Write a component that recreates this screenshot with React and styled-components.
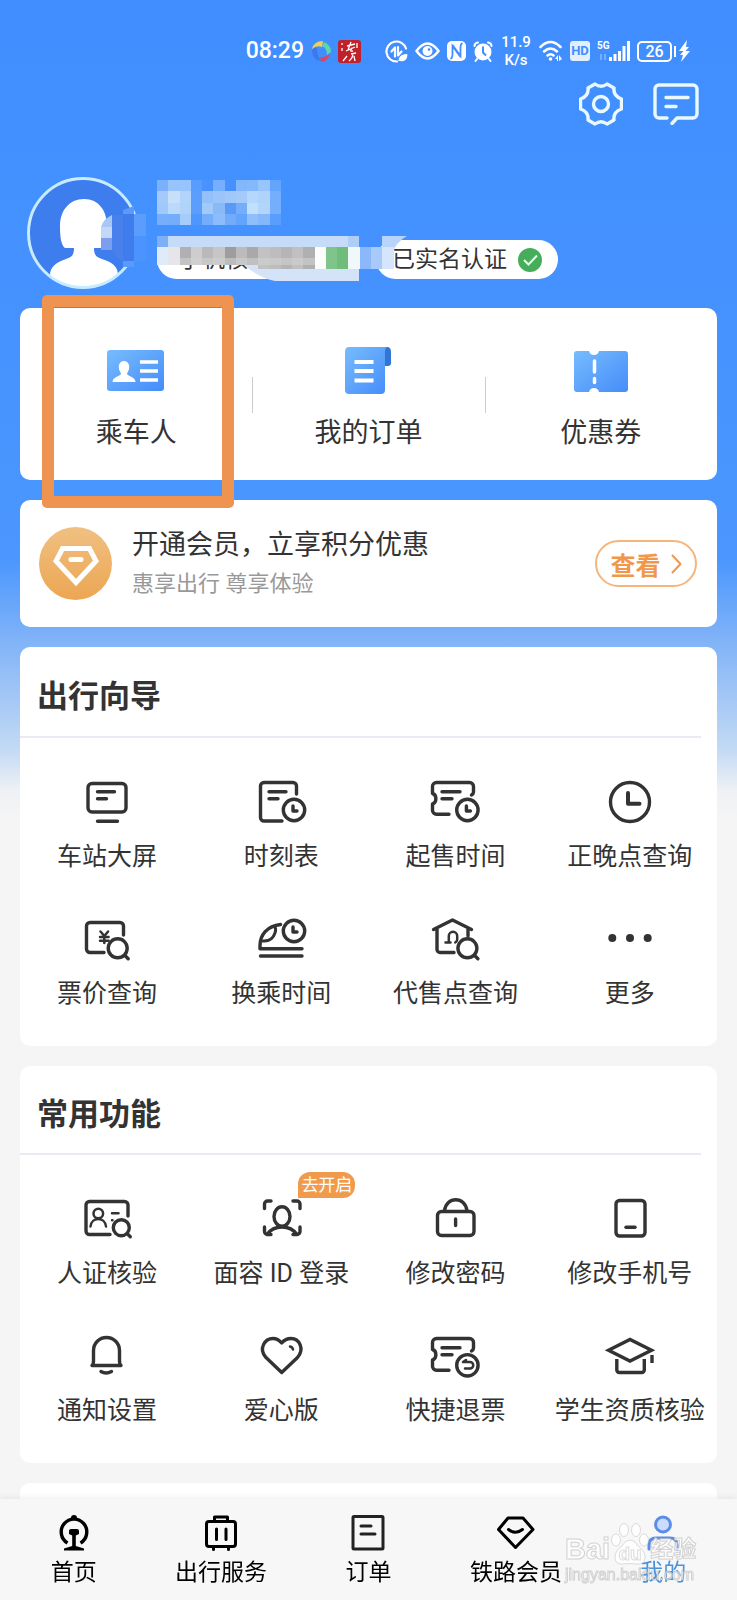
import React from 'react';
import styled, { createGlobalStyle } from 'styled-components';

const GlobalStyle = createGlobalStyle`
    * {
        box-sizing: border-box;
    }
    body {
        margin: 0;
        background: #f5f5f5;
        color: #333;
        font-family: Roboto, "Noto Sans CJK SC", sans-serif;
    }
    button {
        padding: 0;
        border: 0;
        background: none;
        font: inherit;
        color: inherit;
        cursor: pointer;
    }
    svg {
        display: block;
    }
`;

const Screen = styled.div`
    display: flex;
    flex-direction: column;
    height: 100vh;
`;

const Content = styled.main`
    flex: 1;
    min-height: 0;
    overflow-y: auto;
    scrollbar-width: none;
`;

const Backdrop = styled.div`
    background: linear-gradient(
        #408eff 0, #4592ff 300px, #4b97fe 560px, #7db1f8 635px,
        #c3daf4 750px, #eef1f5 790px, #f5f5f5 820px
    );
`;

/* status bar */

const StatusBar = styled.div`
    display: flex;
    align-items: center;
    justify-content: flex-end;
    gap: 7px;
    height: 66px;
    padding: 36px 47px 0 0;
    color: #fff;
`;

const Clock = styled.time`
    font-size: 23px;
    font-weight: 500;
    line-height: 30px;
`;

const StatusGap = styled.span`
    width: 10px;
`;

const Speed = styled.span`
    width: 32px;
    font-size: 15px;
    font-weight: 500;
    line-height: 18px;
    text-align: center;
`;

const HdTag = styled.span`
    width: 20px;
    border-radius: 3px;
    background: #e3efff;
    color: #408eff;
    font-size: 13px;
    font-weight: 700;
    line-height: 20px;
    text-align: center;
`;

const Battery = styled.span`
    position: relative;
    width: 35px;
    border: 2px solid #fff;
    border-radius: 5px;
    font-size: 16px;
    font-weight: 500;
    line-height: 17px;
    text-align: center;

    &::after {
        content: "";
        position: absolute;
        top: 3px;
        right: -6px;
        width: 2px;
        height: 11px;
        background: #fff;
    }
`;

/* profile header */

const Actions = styled.div`
    display: flex;
    justify-content: flex-end;
    align-items: center;
    gap: 30px;
    height: 44px;
    margin-top: 16px;
    padding-right: 38px;
`;

const Profile = styled.section`
    display: flex;
    gap: 18px;
    margin-top: 51px;
    padding: 0 27px;
`;

const ProfileInfo = styled.div`
    display: flex;
    flex-direction: column;
    gap: 15px;
    padding-top: 3px;
`;

const Pills = styled.div`
    position: relative;
    display: flex;
    gap: 6px;
`;

const Pill = styled.span`
    display: flex;
    align-items: center;
    gap: 11px;
    min-width: ${props => props.$wide ? '213px' : '0'};
    height: 39px;
    padding: 0 16px 0 ${props => props.$wide ? '22px' : '16px'};
    border-radius: 20px;
    background: #fff;
    font-size: 23px;
    line-height: 36px;
`;

const PillMask = styled.svg`
    position: absolute;
    top: -4px;
    left: 0;
`;

/* cards */

const Stack = styled.div`
    display: flex;
    flex-direction: column;
    gap: 20px;
    padding: 19px 20px 0;
`;

const Card = styled.section`
    border-radius: 10px;
    background: #fff;
`;

const Shortcuts = styled(Card)`
    position: relative;
    display: grid;
    grid-template-columns: repeat(3, 1fr);
`;

const Shortcut = styled.button`
    position: relative;
    display: flex;
    flex-direction: column;
    align-items: center;
    gap: 19px;
    padding: 38px 0 29px;
    font-size: 27px;
    line-height: 36px;

    & + &::before {
        content: "";
        position: absolute;
        left: 0;
        top: 69px;
        width: 1px;
        height: 36px;
        background: #ccc;
    }
`;

const Highlight = styled.span`
    position: absolute;
    top: -13px;
    left: 22px;
    bottom: -28px;
    width: 192px;
    border: 12px solid #ee9350;
    border-radius: 5px;
    pointer-events: none;
    z-index: 1;
`;

const MemberCard = styled(Card)`
    display: flex;
    align-items: center;
    gap: 20px;
    height: 127px;
    padding: 0 20px 0 19px;
`;

const MemberText = styled.div`
    flex: 1;

    h3 {
        margin: 0;
        font-size: 27px;
        font-weight: 400;
        line-height: 40px;
    }
    p {
        margin: 0;
        color: #999;
        font-size: 22px;
        line-height: 38px;
    }
`;

const ViewButton = styled.button`
    display: flex;
    align-items: center;
    justify-content: center;
    gap: 10px;
    width: 102px;
    height: 47px;
    border: 2px solid #f5b57c;
    border-radius: 24px;
    color: #f0974a;
    font-size: 25px;
    font-weight: 700;
`;

const SectionTitle = styled.h2`
    display: flex;
    align-items: center;
    height: ${props => props.$height}px;
    margin: 0 16px 0 0;
    padding: 10px 0 6px 17px;
    border-bottom: 2px solid #e9ebf2;
    font-size: 31px;
    font-weight: 700;
`;

const TileGrid = styled.div`
    display: grid;
    grid-template-columns: repeat(4, 1fr);
    row-gap: 39px;
    padding: 39px 0 34px;
`;

const Tile = styled.button`
    position: relative;
    display: flex;
    flex-direction: column;
    align-items: center;
    gap: 12px;
    font-size: 25px;
    line-height: 36px;
    white-space: nowrap;
`;

const Badge = styled.span`
    position: absolute;
    top: -22px;
    left: calc(50% + 17px);
    padding: 0 3px;
    border-radius: 12px 12px 12px 0;
    background: #f29a4c;
    color: #fff;
    font-size: 17px;
    line-height: 26px;
`;

const NextCard = styled(Card)`
    height: 80px;
`;

/* bottom tabs */

const TabBar = styled.nav`
    position: relative;
    display: grid;
    grid-template-columns: repeat(5, 1fr);
    padding: 16px 0 11px;
    background: #f7f7f7;
    box-shadow: 0 -2px 6px rgba(0, 0, 0, 0.06);
`;

const Tab = styled.a`
    display: flex;
    flex-direction: column;
    align-items: center;
    gap: 6px;
    color: ${props => props.$active ? '#4a93dc' : '#000'};
    font-size: 23px;
    line-height: 32px;
    text-decoration: none;
`;

const Watermark = styled.div`
    position: absolute;
    right: 40px;
    bottom: 15px;
    width: 132px;
    color: rgba(255, 255, 255, 0.75);
    font-family: "Liberation Sans", "Noto Sans CJK SC", sans-serif;
    -webkit-text-stroke: 1px rgba(170, 170, 170, 0.5);
    pointer-events: none;
`;

const WatermarkBrand = styled.div`
    display: flex;
    align-items: flex-end;
    font-size: 29px;
    font-weight: 700;
    line-height: 32px;

    small {
        font-size: 23px;
    }
`;

const WatermarkSite = styled.div`
    font-size: 16px;
    line-height: 20px;
`;

/* icons */

const Glyph = ({ children, width = 56, height = 50, color = '#333', stroke = 3.4 }) => (
    <svg
        width={width}
        height={height}
        viewBox={`0 0 ${width} ${height}`}
        fill="none"
        stroke={color}
        strokeWidth={stroke}
        strokeLinecap="round"
        strokeLinejoin="round"
        aria-hidden="true"
    >
        {children}
    </svg>
);

const SmallClock = ({ x, y }) => (
    <g>
        <circle cx={x} cy={y} r="10.7"/>
        <path d={`M${x - 1} ${y - 4}v5h4`}/>
    </g>
);

const Lens = ({ x, y, r = 9.5 }) => (
    <g>
        <circle cx={x} cy={y} r={r}/>
        <path d={`M${x + r - 2} ${y + r - 2}l3 3`}/>
    </g>
);

const ticketPath = "M21 37.2H8.5a4 4 0 0 1-4-4V27c4.5-1 4.5-9.5 0-10.5V9.5a4 4 0 0 1 4-4h33a4 4 0 0 1 4 4v5.5q0 2-2 3M14 14.7h18M14 21.7h10";

const icons = {
    screen: <Glyph><rect x="9" y="6.5" width="38" height="28.5" rx="4"/><path d="M18.5 14.7h17M18.5 21.7h9M18.5 44.3h20"/></Glyph>,
    timetable: (
        <Glyph>
            <path d="M43.5 17V9A3.5 3.5 0 0 0 40 5.5H11A3.5 3.5 0 0 0 7.5 9v31.5A3.5 3.5 0 0 0 11 44h18M16 14.7h17M16 21.7h9"/>
            <SmallClock x={41} y={33}/>
        </Glyph>
    ),
    saleTime: <Glyph><path d={ticketPath}/><SmallClock x={39.4} y={33}/></Glyph>,
    clock: <Glyph><circle cx="28" cy="25" r="19.5"/><path strokeWidth="4" d="M26 16v10.7h11.5"/></Glyph>,
    price: (
        <Glyph>
            <path d="M44.5 21V12A3.5 3.5 0 0 0 41 8.5H11A3.5 3.5 0 0 0 7.5 12v23a3.5 3.5 0 0 0 3.5 3.5h14"/>
            <path strokeWidth="2.5" d="M21.5 17.5l3.8 4.5 3.8-4.5M21 23h8.6M21 26.8h8.6M25.3 22v7"/>
            <Lens x={38.7} y={34.3}/>
        </Glyph>
    ),
    train: (
        <Glyph>
            <path d="M27.6 10.5C14 12 7 21 7 31.5v3.2h42M7.500 42h41.5"/>
            <path strokeWidth="3" d="M21.500 12.500q2 2 .5 6.500c-2 6-7 8.500-12.500 8"/>
            <SmallClock x={41} y={17}/>
        </Glyph>
    ),
    agency: (
        <Glyph>
            <path d="M5.5 15.5l19-9.5 19 9.5M9 14v21.5a3 3 0 0 0 3 3h14M40 14.5V22"/>
            <path strokeWidth="2.5" d="M17.500 28.500h5M20.800 28V22a4.200 4.200 0 0 1 8.400 0v3.500q0 2-2 3"/>
            <Lens x={39.4} y={34.3}/>
        </Glyph>
    ),
    more: <Glyph><g fill="#333" stroke="none"><circle cx="10.3" cy="24" r="4"/><circle cx="28" cy="24" r="4"/><circle cx="45.7" cy="24" r="4"/></g></Glyph>,
    verify: (
        <Glyph>
            <path d="M49 22V11a3.5 3.5 0 0 0-3.5-3.5h-35A3.5 3.5 0 0 0 7 11v26a3.5 3.5 0 0 0 3.5 3.5H31"/>
            <path strokeWidth="2.5" d="M11.5 32.5c1-10 14.5-10 15.5 0M33 19.3h6.5M33 26.3h.5"/>
            <circle cx="19.3" cy="19.5" r="4.8" strokeWidth="2.5"/>
            <Lens x={42.3} y={33.7} r={8}/>
        </Glyph>
    ),
    face: (
        <Glyph>
            <path d="M11.500 14.500V10a3 3 0 0 1 3-3H18M40 7h4a3 3 0 0 1 3 3v4.500M11.500 33v4.500a3 3 0 0 0 3 3H18M40 40.500h4a3 3 0 0 0 3-3V33M14 40.500c7-10 23-10 30 0"/>
            <ellipse cx="29" cy="22.5" rx="8" ry="9.8"/>
        </Glyph>
    ),
    lock: <Glyph><rect x="9.500" y="17.500" width="36.500" height="24" rx="4"/><path d="M16.500 17C18 2 37.500 2 39 17M27.600 25v6.500"/></Glyph>,
    phone: <Glyph><rect x="14" y="6.5" width="29" height="35.5" rx="3.5"/><path d="M24 33.3h9"/></Glyph>,
    bell: <Glyph><path d="M13 34.500q1.500-1 1.500-5V19.500a13 13 0 0 1 26 0v10q0 4 1.500 5zM22 40.500q5 3 10.500 0"/></Glyph>,
    heart: (
        <Glyph>
            <path d="M28.700 41.500L13 26.500C5 17.500 12 7.500 20 7.500q5 0 8.700 4.500Q32.500 7.500 38 7.500c8 0 14 10 6.500 19z"/>
            <path strokeWidth="2.5" d="M37 15.5q2.500.5 3 3"/>
        </Glyph>
    ),
    refund: (
        <Glyph>
            <path transform="translate(0 2)" d={ticketPath}/>
            <circle cx="39.4" cy="34.3" r="10.7"/>
            <path strokeWidth="2.5" d="M38 29l-3 2h7a3 3 0 0 1 0 6.500h-5"/>
        </Glyph>
    ),
    student: <Glyph><path strokeLinejoin="miter" d="M6.500 19.200L28 8.500l21.500 10.700L28 30z"/><path strokeLinecap="butt" d="M14.800 28V39a2.500 2.500 0 0 0 2.500 2.500h22.500a2.500 2.500 0 0 0 2.500-2.500V28M50 24v8"/></Glyph>
};

const tabIcons = {
    home: (
        <Glyph width={36} height={36} color="#000">
            <path strokeLinecap="butt" d="M11.500 28a12.800 12.800 0 1 1 13 0"/>
            <path fill="#000" stroke="none" d="M15 3q0-3 3-3t3 3v1h-6zM13 16q0-2 2-2h6q2 0 2 2v3l-3.200 1.500V31l8.200 2.500V35.500H8v-2L16.200 31V20.500L13 19z"/>
        </Glyph>
    ),
    service: (
        <Glyph width={36} height={36} color="#000" stroke={3}>
            <rect x="3.500" y="6.500" width="29" height="25" rx="2.500"/>
            <path d="M11.500 6V2h13v4M13.500 14v10.500M23 14v10.500M10.500 32v2.500M25.500 32v2.500"/>
        </Glyph>
    ),
    order: <Glyph width={36} height={36} color="#222" stroke={3}><rect x="3" y="1.500" width="30" height="32.500" rx="1"/><path d="M11 11h10M11 19h14"/></Glyph>,
    member: <Glyph width={40} height={36} color="#000" stroke={3}><path d="M12 3h15L37 14.500 19.500 32.500 2.500 14.500zM12.500 14.500q7 5.500 14 0"/></Glyph>,
    mine: (
        <Glyph width={36} height={36} color="#5b8de8" stroke={3}>
            <circle cx="18" cy="9.500" r="7.500" fill="#c9dcfb"/>
            <path d="M4 34v-4q0-7 7-7h14q7 0 7 7v4"/>
        </Glyph>
    )
};

const BlueFill = ({ id }) => (
    <linearGradient id={id} x1="0" y1="0" x2="1" y2="1">
        <stop offset="0" stopColor="#77bcfd"/>
        <stop offset="1" stopColor="#458cfa"/>
    </linearGradient>
);

const shortcutIcons = {
    passenger: (
        <svg width="58" height="50" aria-hidden="true">
            <BlueFill id="passengerFill"/>
            <rect y="4" width="57" height="41" rx="3" fill="url(#passengerFill)"/>
            <path fill="#fff" d="M17 15c3.500 0 5.500 3 5.200 6.500-.2 3-1.500 4.500-2.200 6 0 3 8.500 3 8.500 8.500H5.500c0-5.500 8.500-5.500 8.500-8.500-.7-1.500-2-3-2.200-6-.3-3.500 1.700-6.500 5.200-6.500z"/>
            <path stroke="#fff" strokeWidth="3.500" d="M33 16h18M33 25h18M33 34h18"/>
        </svg>
    ),
    orders: (
        <svg width="48" height="50" aria-hidden="true">
            <BlueFill id="ordersFill"/>
            <path fill="#2f77d3" d="M38 1h5q4 0 4 5v11q0 3-3 3h-6z"/>
            <path fill="url(#ordersFill)" d="M5 1h38q-2 1-2 5v38q0 4-4 4H5q-4 0-4-4V6q0-5 4-5z"/>
            <path stroke="#fff" strokeWidth="4" d="M10.500 16h19M10.500 25h19M10.500 34.500h19"/>
        </svg>
    ),
    coupon: (
        <svg width="54" height="50" aria-hidden="true">
            <BlueFill id="couponFill"/>
            <path fill="url(#couponFill)" d="M3 5h12q1 4 5 4t5-4h26q3 0 3 3v35q0 3-3 3H25q-1-4-5-4t-5 4H3q-3 0-3-3V8q0-3 3-3z"/>
            <path stroke="#fff" strokeWidth="3.500" strokeLinecap="round" d="M20.500 15v11M20.500 32.500v4"/>
        </svg>
    )
};

const GearIcon = () => (
    <Glyph width={44} height={44} color="#eaf8ff">
        <path d="M16 2Q22 6.500 28 2L35 6Q34 14 42.500 17V27Q34 30 35 38L28 42Q22 37.500 16 42L9 38Q10 30 1.500 27V17Q10 14 9 6z"/>
        <circle cx="22" cy="22" r="7.5"/>
    </Glyph>
);

const ChatIcon = () => (
    <Glyph width={46} height={42} color="#eaf8ff">
        <path d="M14 35H6a4 4 0 0 1-4-4V6a4 4 0 0 1 4-4h34a4 4 0 0 1 4 4v25a4 4 0 0 1-4 4H24l-5 5.500M13 14.500h22M13 23.500h10"/>
    </Glyph>
);

const StatusIcons = {
    ball: (
        <svg width="20" height="22" aria-hidden="true">
            <path fill="#f2cf4e" d="M1 9Q3 1 12 1l-1 6Q5 5 1 9z"/>
            <path fill="#5fd6a4" d="M13 2q7 3 7 10l-4 3q0-7-5-9z"/>
            <path fill="#e0455c" d="M19 14q-2 7-9 8l-1-5q5 1 10-3z"/>
            <path fill="#3a78ee" d="M1 10q3-3 5-2 0 8 4 13-9-1-9-11z"/>
        </svg>
    ),
    seal: (
        <svg width="23" height="23" aria-hidden="true">
            <rect width="23" height="23" rx="3" fill="#c0212b"/>
            <path fill="none" stroke="#fff" strokeWidth="1.3" d="M9 6l8-2M13 2l-3 8M8 11l9-4M14 8q-3 4 1 3M19 3v5M4 3v2M4 8v3M5 21l4-5M13 14l5-1M15 13q0 5-4 8M16 16l1 5"/>
        </svg>
    ),
    data: (
        <Glyph width={23} height={23} color="#fff" stroke={2.2}>
            <path d="M21 8.500A10 10 0 1 0 12 21.500M6.500 11.500l3.500-4v9M13 7v8.500l3.500-4"/>
            <path fill="#fff" strokeWidth="1" d="M14 20.500q0-6 8-6 0 8-8 6z"/>
        </Glyph>
    ),
    eye: (
        <svg width="25" height="20" aria-hidden="true">
            <path fill="none" stroke="#fff" strokeWidth="2.5" d="M1.500 10Q12.500-5 23.500 10 12.500 25 1.500 10z"/>
            <circle cx="12.5" cy="10" r="5" fill="#fff"/>
            <circle cx="14" cy="8.5" r="1.3" fill="#408eff"/>
        </svg>
    ),
    nfc: (
        <svg width="19" height="20" aria-hidden="true">
            <rect width="19" height="20" rx="5" fill="#fff"/>
            <path fill="none" stroke="#408eff" strokeWidth="1.8" d="M3.500 18Q5.500 17 5.500 14V5l8 11M15.500 2q-2 1-2 4v9L5.500 4"/>
        </svg>
    ),
    alarm: (
        <svg width="20" height="21" aria-hidden="true">
            <circle cx="10" cy="11" r="8.5" fill="#fff"/>
            <path fill="none" stroke="#fff" strokeWidth="2" strokeLinecap="round" d="M1.500 5q0-3 3.500-3.500M18.500 5q0-3-3.500-3.500M4 18l-1.500 2M16 18l1.500 2"/>
            <path fill="none" stroke="#408eff" strokeWidth="2" d="M10 5.500v6l3 3"/>
        </svg>
    ),
    wifi: (
        <svg width="24" height="22" aria-hidden="true">
            <path fill="none" stroke="#fff" strokeWidth="2.5" strokeLinecap="round" d="M1.500 7q10-10 20 0M5 11.500q6.500-6 13 0M8.500 15.500q3-2.500 6 0"/>
            <circle cx="11.5" cy="19" r="1.8" fill="#fff"/>
            <path fill="#fff" d="M16 19l3-4v6h-1v-2zM20 21v-6l3 4z"/>
        </svg>
    ),
    signal: (
        <svg width="33" height="22" aria-hidden="true">
            <text x="0" y="9" fill="#fff" fontSize="10" fontWeight="700">5G</text>
            <path stroke="#8dbbff" strokeWidth="1.5" d="M4 14v6M8 14v6"/>
            <path stroke="#fff" strokeWidth="3" d="M13.500 21v-4M18 21v-7M22.500 21V11M27 21V6M31.500 21V1"/>
        </svg>
    ),
    bolt: (
        <svg width="11" height="22" aria-hidden="true">
            <path fill="#fff" d="M8 0L0 11h4.500L1 15h3l-2 7 9-11H6.500L10 7H7z"/>
        </svg>
    )
};

const Avatar = () => (
    <svg width="112" height="112" viewBox="0 0 112 112" overflow="visible" aria-hidden="true">
        <clipPath id="avatarClip"><circle cx="56" cy="56" r="55"/></clipPath>
        <circle cx="56" cy="56" r="54.5" fill="#3d7ded"/>
        <g clipPath="url(#avatarClip)">
            <path fill="#fff" d="M57 22c15 0 23 12 23 27 0 11-1 21-5 22H67c0 7 2 9 8 11 12 4 16 8 16 17v13H23V99c0-9 5-13 16-17 6-2 8-4 8-11H38c-4-3-5-11-5-22 0-15 9-27 24-27z"/>
        </g>
        <circle cx="56" cy="56" r="54.5" fill="none" stroke="#c9ebff" strokeWidth="3"/>
        <path fill="#a9c6f6" d="M85 38v12H74q2-8 11-12z"/>
        <path fill="#c3d7f8" d="M74 50h11v11H74z"/>
        <path fill="#7b9eee" d="M74 61h11v12H74z"/>
        <path fill="#4880ec" d="M85 38h11v46q-7-2-11-11z"/>
        <path fill="#3f7dec" d="M96 33h11v55H96z"/>
        <path fill="#5b99fb" d="M96 33l11-4v8H96zM96 84h11v6H96z"/>
        <path fill="#4288f8" d="M107 37h6v47h-6z"/>
        <path fill="#5a9dfc" d="M107 37h12v22h-12z"/>
        <path fill="#4b93fd" d="M107 59h12v25h-12z"/>
    </svg>
);

const nameCells = [
    ['#7bb1fb', '#97c4fb', '#97c4fb', '#589cfd', '#4a93fe', '#76affd', '#4791ff', '#83b7fc', '#84b8fc', '#98c5fc', '#63a4fd'],
    ['#a3cafa', '#c8dffa', '#b3d4fa', '#5b9efd', '#94c0fa', '#9ac4fa', '#a0c8fa', '#a4cafb', '#b5d7fb', '#b0d3fb', '#74aefc'],
    ['#a0c8fa', '#bad9fb', '#b0d3fa', '#5b9efd', '#a1c9fa', '#8ab9f8', '#5a99f6', '#74aefb', '#c0e0fb', '#b3d5fb', '#74aefc'],
    ['#76aefc', '#73adfc', '#a6ccfb', '#4f97fe', '#73adfc', '#8cbcfb', '#73abfb', '#62a3fc', '#8fbffb', '#85b8fb', '#5a9efd']
];

const phoneCells = [
    '#e0ebf9', '#e6e6ea', '#b0b0b0', '#cdcdcd', '#b9b9b9', '#c6c6c6', '#9d9d9d', '#bbbbbb', '#a9a9a9', '#c2c2c2',
    '#bdbdbd', '#b5b5b5', '#c0c0c0', '#b0b0b0', '#fbfdfd', '#7fc48b', '#70bc7b', '#f0f8fa', '#8ab8fb', '#a8cafb', '#d5e5fb'
];

const NameMask = () => (
    <svg width="124" height="45" viewBox="0 0 11 4" preserveAspectRatio="none" shapeRendering="crispEdges" aria-hidden="true">
        {nameCells.map((row, y) => row.map((fill, x) => (
            <rect key={`${x}-${y}`} x={x} y={y} width="1" height="1" fill={fill}/>
        )))}
    </svg>
);

const PhoneMask = () => (
    <PillMask width="250" height="45" aria-hidden="true">
        <path fill="#4591ff" d="M202 0h12v45h-12z"/>
        <path fill="#d4e3f8" d="M88 29H202V45H118Q103 42 88 30z"/>
        <path fill="#7db0f7" d="M0 0h11v11H0z"/>
        <path fill="#c5dbf8" d="M11 0h180v11H11z"/>
        <path fill="#aecdf7" d="M191 0h11v11h-11z"/>
        <path fill="#b9d4fa" d="M225 0h25q-12 6-18 24l-7 6z"/>
        {phoneCells.map((fill, i) => (
            <rect
                key={i}
                x={Math.round(i * 11.25)}
                y="11"
                width="12"
                height={i < 9 ? 18 : 22}
                fill={fill}
            />
        ))}
        <path fill="#d0d0d0" opacity=".6" d="M23 22h135v7H23z"/>
    </PillMask>
);

const MemberIcon = () => (
    <svg width="73" height="73" aria-hidden="true">
        <linearGradient id="memberFill" x1="0" y1="0" x2="0" y2="1">
            <stop offset="0" stopColor="#f0c081"/>
            <stop offset="1" stopColor="#eca653"/>
        </linearGradient>
        <circle cx="36.5" cy="36.5" r="36.5" fill="url(#memberFill)"/>
        <path fill="none" stroke="#fff" strokeWidth="5" d="M23.500 21.500h27L57 34 37 55.500 17 34z"/>
        <path stroke="#fff" strokeWidth="5" strokeLinecap="round" d="M32 32.500h10"/>
    </svg>
);

const CheckIcon = () => (
    <svg width="24" height="24" aria-hidden="true">
        <circle cx="12" cy="12" r="12" fill="#46ad5b"/>
        <path fill="none" stroke="#e6ffe9" strokeWidth="2" d="M6 12l4.500 4.500L19 7.500"/>
    </svg>
);

/* data */

const shortcuts = [
    { icon: 'passenger', label: '乘车人' },
    { icon: 'orders', label: '我的订单' },
    { icon: 'coupon', label: '优惠券' }
];

const guideTiles = [
    { icon: 'screen', label: '车站大屏' },
    { icon: 'timetable', label: '时刻表' },
    { icon: 'saleTime', label: '起售时间' },
    { icon: 'clock', label: '正晚点查询' },
    { icon: 'price', label: '票价查询' },
    { icon: 'train', label: '换乘时间' },
    { icon: 'agency', label: '代售点查询' },
    { icon: 'more', label: '更多' }
];

const commonTiles = [
    { icon: 'verify', label: '人证核验' },
    { icon: 'face', label: '面容 ID 登录', badge: '去开启' },
    { icon: 'lock', label: '修改密码' },
    { icon: 'phone', label: '修改手机号' },
    { icon: 'bell', label: '通知设置' },
    { icon: 'heart', label: '爱心版' },
    { icon: 'refund', label: '快捷退票' },
    { icon: 'student', label: '学生资质核验' }
];

const tabs = [
    { icon: 'home', label: '首页' },
    { icon: 'service', label: '出行服务' },
    { icon: 'order', label: '订单' },
    { icon: 'member', label: '铁路会员' },
    { icon: 'mine', label: '我的', active: true }
];

const TileSection = ({ title, headHeight, tiles }) => (
    <Card>
        <SectionTitle $height={headHeight}>{title}</SectionTitle>
        <TileGrid>
            {tiles.map(tile => (
                <Tile key={tile.label} type="button">
                    {icons[tile.icon]}
                    {tile.label}
                    {tile.badge && <Badge>{tile.badge}</Badge>}
                </Tile>
            ))}
        </TileGrid>
    </Card>
);

const App = () => (
    <Screen lang="zh-CN">
        <GlobalStyle/>
        <Content>
            <Backdrop>
                <StatusBar>
                    <Clock>08:29</Clock>
                    {StatusIcons.ball}
                    {StatusIcons.seal}
                    <StatusGap/>
                    {StatusIcons.data}
                    {StatusIcons.eye}
                    {StatusIcons.nfc}
                    {StatusIcons.alarm}
                    <Speed>11.9 K/s</Speed>
                    {StatusIcons.wifi}
                    <HdTag>HD</HdTag>
                    {StatusIcons.signal}
                    <Battery>26</Battery>
                    {StatusIcons.bolt}
                </StatusBar>
                <Actions>
                    <button type="button" aria-label="设置"><GearIcon/></button>
                    <button type="button" aria-label="消息"><ChatIcon/></button>
                </Actions>
                <Profile>
                    <Avatar/>
                    <ProfileInfo>
                        <NameMask/>
                        <Pills>
                            <Pill $wide>手机核验<PhoneMask/></Pill>
                            <Pill>已实名认证<CheckIcon/></Pill>
                        </Pills>
                    </ProfileInfo>
                </Profile>
                <Stack>
                    <Shortcuts>
                        {shortcuts.map(item => (
                            <Shortcut key={item.label} type="button">
                                {shortcutIcons[item.icon]}
                                {item.label}
                            </Shortcut>
                        ))}
                        <Highlight/>
                    </Shortcuts>
                    <MemberCard>
                        <MemberIcon/>
                        <MemberText>
                            <h3>开通会员，立享积分优惠</h3>
                            <p>惠享出行 尊享体验</p>
                        </MemberText>
                        <ViewButton type="button">
                            查看
                            <Glyph width={11} height={20} color="#f0974a" stroke={2}><path d="M1.500 1.500l8 8.500-8 8.500"/></Glyph>
                        </ViewButton>
                    </MemberCard>
                    <TileSection title="出行向导" headHeight={91} tiles={guideTiles}/>
                    <TileSection title="常用功能" headHeight={89} tiles={commonTiles}/>
                    <NextCard/>
                </Stack>
            </Backdrop>
        </Content>
        <TabBar>
            {tabs.map(tab => (
                <Tab key={tab.label} href="#" $active={tab.active}>
                    {tabIcons[tab.icon]}
                    {tab.label}
                </Tab>
            ))}
            <Watermark>
                <WatermarkBrand>
                    Bai
                    <svg width="40" height="42" viewBox="0 0 40 42" fill="#fff" fillOpacity=".7" stroke="#bbb" strokeOpacity=".5" aria-hidden="true">
                        <ellipse cx="6" cy="17" rx="4.5" ry="6"/>
                        <ellipse cx="14" cy="7" rx="4.5" ry="6.5"/>
                        <ellipse cx="26" cy="7" rx="4.5" ry="6.5"/>
                        <ellipse cx="34" cy="17" rx="4.5" ry="6"/>
                        <path d="M20 17q5 0 8 6 7 5 7 11 0 8-8 7-7-1-14 0-8 1-8-7 0-6 7-11 3-6 8-6z"/>
                        <text x="20" y="37" fontSize="19" fontWeight="700" textAnchor="middle" stroke="#bbb">du</text>
                    </svg>
                    <small>经验</small>
                </WatermarkBrand>
                <WatermarkSite>jingyan.baidu.com</WatermarkSite>
            </Watermark>
        </TabBar>
    </Screen>
);

export default App;
